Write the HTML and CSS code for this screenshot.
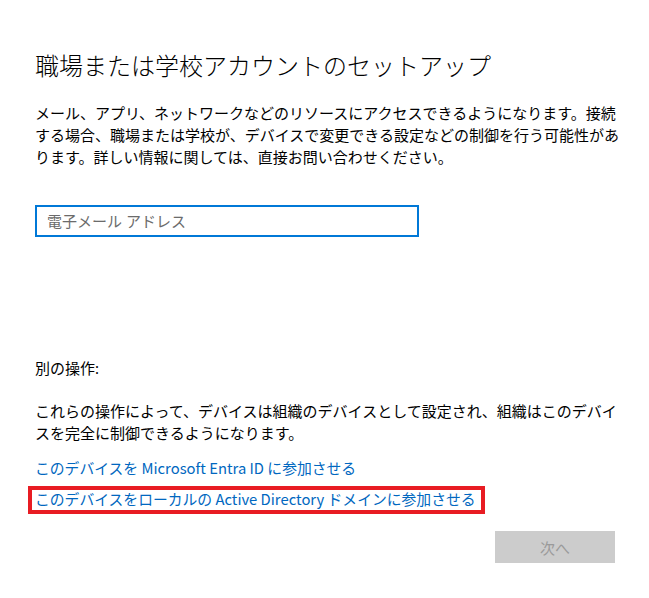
FILE: index.html
```html
<!DOCTYPE html>
<html lang="ja">
<head>
<meta charset="utf-8">
<title>職場または学校アカウントのセットアップ</title>
<link rel="stylesheet" href="styles.css">
</head>
<body>
<main class="page">
  <h1 class="title">職場または学校アカウントのセットアップ</h1>
  <p class="intro">メール、アプリ、ネットワークなどのリソースにアクセスできるようになります。接続する場合、職場または学校が、デバイスで変更できる設定などの制御を行う可能性があります。詳しい情報に関しては、直接お問い合わせください。</p>
  <div class="field">電子メール アドレス</div>
  <p class="label">別の操作:</p>
  <p class="note">これらの操作によって、デバイスは組織のデバイスとして設定され、組織はこのデバイスを完全に制御できるようになります。</p>
  <div class="links">
    <a class="link" href="#">このデバイスを Microsoft Entra ID に参加させる</a>
    <a class="link highlighted" href="#">このデバイスをローカルの Active Directory ドメインに参加させる</a>
  </div>
  <div class="actions">
    <button class="next" type="button">次へ</button>
  </div>
</main>
</body>
</html>
```
FILE: styles.css
```css
html, body {
  margin: 0;
  padding: 0;
  background: #ffffff;
}

body {
  font-family: "Noto Sans", "Noto Sans CJK JP", sans-serif;
  color: #000000;
  font-size: 15px;
  line-height: 22px;
}

.page {
  width: 590px;
  padding: 50px 0 0 35px;
}

.title {
  margin: 0;
  font-size: 24px;
  line-height: 32px;
  font-weight: 300;
  color: #000;
}

.intro {
  margin: 20px 0 0;
}

.field {
  box-sizing: border-box;
  width: 384px;
  height: 32px;
  margin-top: 37px;
  border: 2px solid #0078d7;
  padding: 0 10px;
  color: #6b6b6b;
  line-height: 28px;
}

.label {
  margin: 120px 0 0;
}

.note {
  margin: 21px 0 0;
}

.links {
  display: flex;
  flex-direction: column;
  align-items: flex-start;
  margin-top: 13px;
}

.link {
  font-family: "Noto Sans CJK JP", sans-serif;
  font-size: 14.8px;
  color: #0067c0;
  text-decoration: none;
  line-height: 22px;
}

.link.highlighted {
  margin: 7px 0 0 -7px;
  border: 4px solid #e81c23;
  padding: 0 5px 2px 3px;
  line-height: 18px;
}

.actions {
  display: flex;
  justify-content: flex-end;
  width: 580px;
  margin-top: 17px;
}

.next {
  width: 120px;
  height: 32px;
  border: none;
  background: #cccccc;
  color: #9a9a9a;
  font-family: inherit;
  font-size: 15px;
  padding: 0;
}
```
